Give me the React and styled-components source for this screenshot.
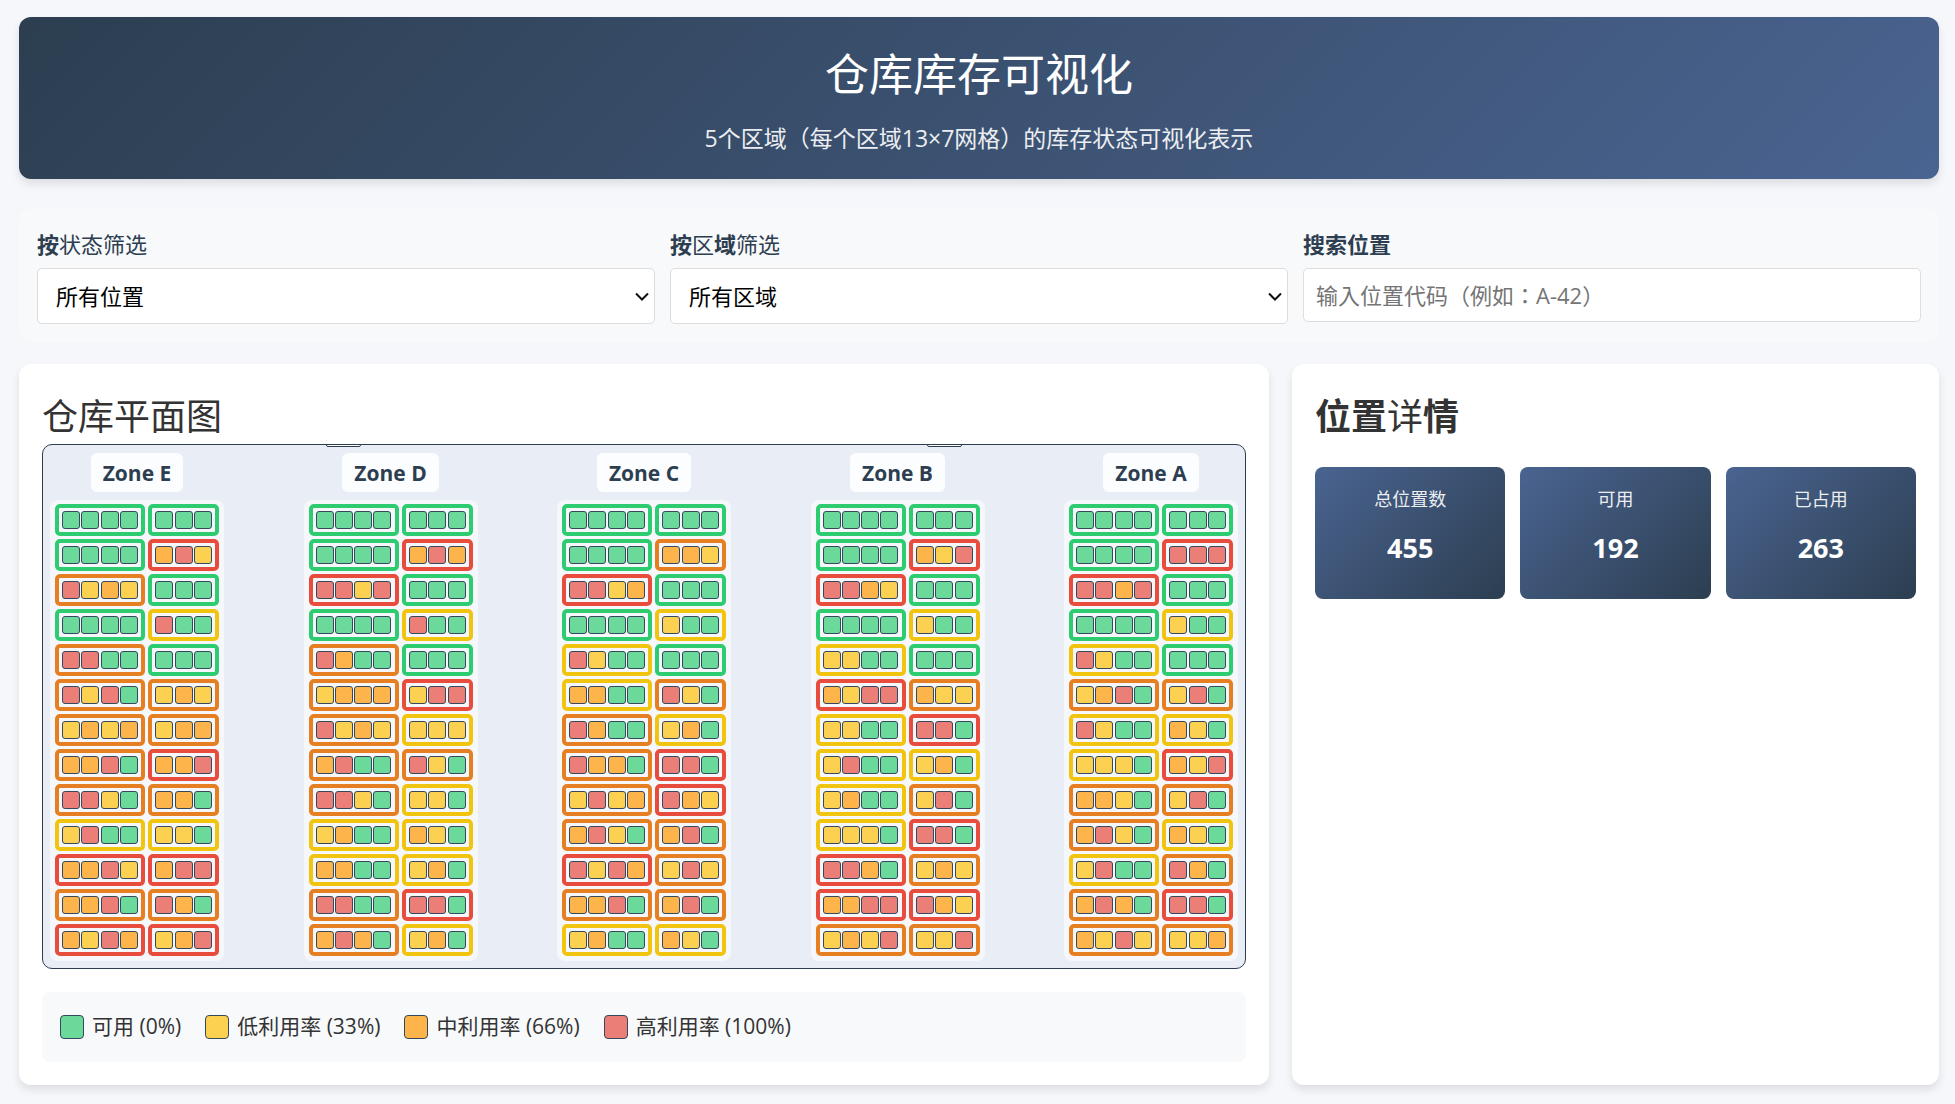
import React from "react";
import styled, { createGlobalStyle } from "styled-components";

const sans = '"Open Sans", "Noto Sans CJK SC", sans-serif';

const status = {
  g: { fill: "#6ad99a", line: "#2ecc71" },
  y: { fill: "#fcd050", line: "#f1c40f" },
  o: { fill: "#fcb44b", line: "#e67e22" },
  r: { fill: "#eb7e76", line: "#e74c3c" },
};

/* Each shelf is "outline:cells"; a row holds a four-cell and a three-cell shelf. */
const zones = [
  {
    name: "Zone E",
    rows: [
      "g:gggg g:ggg", "g:gggg r:ory", "o:ryoy g:ggg", "g:gggg y:rgg", "o:rrgg g:ggg",
      "o:ryrg o:yoy", "o:yoyo o:yoo", "o:oorg r:oor", "o:rryg o:oog", "y:yrgg y:yyg",
      "r:oory r:orr", "o:oorg o:rog", "r:oyro r:yor",
    ],
  },
  {
    name: "Zone D",
    rows: [
      "g:gggg g:ggg", "g:gggg r:oro", "r:rryr g:ggg", "g:gggg y:rgg", "o:rogg g:ggg",
      "o:yooo r:yrr", "o:ryoy y:yyy", "o:orgg o:ryg", "o:rryg y:yyg", "y:yogg y:oyg",
      "y:oogg y:yog", "o:rrgg r:rrg", "o:orog y:yog",
    ],
  },
  {
    name: "Zone C",
    rows: [
      "g:gggg g:ggg", "g:gggg o:ooy", "r:rryo g:ggg", "g:gggg y:ygg", "y:rygg g:ggg",
      "y:oogg o:ryg", "o:rogg y:yog", "o:roog r:rrg", "o:yryo r:roy", "o:oryg o:org",
      "r:ryro o:yry", "o:oorg o:org", "y:yogg y:oyg",
    ],
  },
  {
    name: "Zone B",
    rows: [
      "g:gggg g:ggg", "g:gggg r:oyr", "r:rroy g:ggg", "g:gggg y:ygg", "y:yygg g:ggg",
      "r:oyrr o:oyy", "y:yygg r:rrg", "y:yrgg y:yog", "y:yogg o:yrg", "y:yyyg r:rrg",
      "r:rrog o:yoy", "r:oorr r:roy", "o:yoyr o:yyr",
    ],
  },
  {
    name: "Zone A",
    rows: [
      "g:gggg g:ggg", "g:gggg r:rrr", "r:rror g:ggg", "g:gggg y:ygg", "y:rygg g:ggg",
      "o:yorg o:yrg", "y:rygg y:oyg", "y:yyyg r:oyr", "o:ooyg o:yrg", "o:oryg y:oyg",
      "y:yrgg o:rog", "o:orog r:rrg", "o:oyry o:yyo",
    ],
  },
];

const legend = [
  ["g", "可用 (0%)"],
  ["y", "低利用率 (33%)"],
  ["o", "中利用率 (66%)"],
  ["r", "高利用率 (100%)"],
];

const GlobalStyle = createGlobalStyle`
  *, *::before, *::after { box-sizing: border-box; }
  body {
    margin: 0;
    background: #f5f7fa;
    color: #333;
    font-family: ${sans};
  }
`;

const Page = styled.div`
  min-height: 100vh;
  display: flex;
  flex-direction: column;
  padding: 17px 16px 19px 19px;
`;

const Banner = styled.header`
  display: flex;
  flex-direction: column;
  align-items: center;
  gap: 13px;
  padding: 24px 24px 22px;
  border-radius: 12px;
  background: linear-gradient(135deg, #2c3e50, #4a6491);
  box-shadow: 0 5px 8px rgba(0, 0, 0, 0.1);
  color: #fff;
  text-align: center;
`;

const Title = styled.h1`
  margin: 0;
  font-size: 44px;
  line-height: 66px;
  font-weight: 400;
`;

const Subtitle = styled.p`
  margin: 0;
  font-size: 23px;
  line-height: 37px;
  opacity: 0.9;
`;

const Filters = styled.form`
  display: grid;
  grid-template-columns: repeat(3, 1fr);
  align-items: start;
  gap: 15px;
  margin: 30px 0 22px;
  padding: 18px;
  border-radius: 10px;
  background: #f8f9fb;
`;

const Field = styled.div`
  display: flex;
  flex-direction: column;
  gap: 6px;
`;

const Label = styled.label`
  font-size: 22px;
  line-height: 35px;
  font-weight: 700;
  color: #2c3e50;
`;

const Thin = styled.span`
  font-weight: 400;
`;

const SelectBox = styled.div`
  position: relative;
`;

const Select = styled.select`
  display: block;
  width: 100%;
  height: 56px;
  padding: 0 30px 0 18px;
  border: 1px solid #ddd;
  border-radius: 5px;
  background: #fff;
  color: #000;
  font-family: inherit;
  font-size: 22px;
  appearance: none;
`;

const Chevron = styled.svg`
  position: absolute;
  top: 24px;
  right: 6px;
  width: 14px;
  height: 9px;
  pointer-events: none;
`;

const Input = styled.input`
  width: 100%;
  height: 54px;
  padding: 0 12px;
  border: 1px solid #ddd;
  border-radius: 5px;
  background: #fff;
  font-family: "Open Sans", "Noto Sans CJK TC", sans-serif;
  font-size: 22px;

  &::placeholder {
    color: #757575;
  }
`;

const Main = styled.main`
  flex: 1;
  display: grid;
  grid-template-columns: minmax(0, 1.932fr) minmax(0, 1fr);
  gap: 23px;
`;

const Card = styled.section`
  padding: 23px;
  border-radius: 12px;
  background: #fff;
  box-shadow: 0 5px 8px rgba(0, 0, 0, 0.1);
`;

const Heading = styled.h2`
  margin: 0;
  padding-top: 2px;
  font-size: 36px;
  line-height: 55px;
  font-weight: ${(p) => (p.$bold ? 700 : 400)};
`;

const Plan = styled.div`
  position: relative;
  display: flex;
  justify-content: space-between;
  padding: 8px 7px 7px;
  overflow: hidden;
  border: 1px solid #2c3e50;
  border-radius: 10px;
  background: #e9eef6;
`;

const Door = styled.span`
  position: absolute;
  top: -10px;
  left: ${(p) => p.$at};
  width: 35px;
  height: 12px;
  margin-left: -18px;
  border: 1px solid #2c3e50;
  border-radius: 2px;
  background: #fff;
`;

const Zone = styled.div`
  display: flex;
  flex-direction: column;
  align-items: center;
  gap: 8px;
`;

const ZoneName = styled.h3`
  margin: 0;
  padding: 2px 12px 0;
  border-radius: 6px;
  background: rgba(255, 255, 255, 0.85);
  color: #2c3e50;
  font-size: 21px;
  line-height: 37px;
  font-weight: 700;
`;

const Racks = styled.div`
  display: grid;
  grid-template-columns: 90px 71px;
  gap: 3px;
  padding: 4px 5px 5px;
  border-radius: 8px;
  background: #f5f7fb;
`;

const Shelf = styled.div`
  display: flex;
  justify-content: space-between;
  padding: 3px;
  border: 4px solid ${(p) => status[p.$status].line};
  border-radius: 5px;
`;

const Cell = styled.span`
  width: 18px;
  height: 18px;
  border: 1px solid #34495e;
  border-radius: 3px;
  background: ${(p) => status[p.$status].fill};
`;

const Legend = styled.ul`
  display: flex;
  flex-wrap: wrap;
  gap: 24px;
  margin: 23px 0 0;
  padding: 17px 18px 18px;
  border-radius: 8px;
  background: #f8f9fb;
  list-style: none;
`;

const LegendItem = styled.li`
  display: flex;
  align-items: center;
  gap: 8px;
  font-size: 21px;
  line-height: 35px;
`;

const Swatch = styled.span`
  width: 24px;
  height: 24px;
  border: 1px solid #34495e;
  border-radius: 4px;
  background: ${(p) => status[p.$status].fill};
`;

const Stats = styled.div`
  display: grid;
  grid-template-columns: repeat(3, 1fr);
  gap: 15px;
  margin-top: 23px;
`;

const Stat = styled.div`
  display: flex;
  flex-direction: column;
  align-items: center;
  gap: 13px;
  padding: 18px 18px 29px;
  border-radius: 8px;
  background: linear-gradient(135deg, #4a6491, #2c3e50);
  color: #fff;
`;

const StatLabel = styled.span`
  font-size: 18px;
  line-height: 28px;
  opacity: 0.9;
`;

const StatValue = styled.strong`
  font-size: 27px;
  line-height: 44px;
  font-weight: 700;
`;

function Dropdown({ id, children }) {
  return (
    <SelectBox>
      <Select id={id}>{children}</Select>
      <Chevron viewBox="0 0 14 9" fill="none" stroke="#111" strokeWidth="2" aria-hidden="true">
        <path d="M1 1.5 7 7.5 13 1.5" />
      </Chevron>
    </SelectBox>
  );
}

function ZoneBlock({ zone }) {
  return (
    <Zone>
      <ZoneName>{zone.name}</ZoneName>
      <Racks>
        {zone.rows.flatMap((row, r) =>
          row.split(" ").map((shelf, s) => {
            const [outline, cells] = shelf.split(":");
            return (
              <Shelf key={`${r}-${s}`} $status={outline}>
                {cells.split("").map((c, i) => (
                  <Cell key={i} $status={c} />
                ))}
              </Shelf>
            );
          })
        )}
      </Racks>
    </Zone>
  );
}

export default function App() {
  return (
    <>
      <GlobalStyle />
      <Page lang="zh-CN">
        <Banner>
          <Title>仓库库存可视化</Title>
          <Subtitle>5个区域（每个区域13×7网格）的库存状态可视化表示</Subtitle>
        </Banner>

        <Filters>
          <Field>
            <Label htmlFor="status">按<Thin>状态筛选</Thin></Label>
            <Dropdown id="status">
              <option>所有位置</option>
            </Dropdown>
          </Field>
          <Field>
            <Label htmlFor="zone">按<Thin>区</Thin>域<Thin>筛选</Thin></Label>
            <Dropdown id="zone">
              <option>所有区域</option>
            </Dropdown>
          </Field>
          <Field>
            <Label htmlFor="search">搜索位置</Label>
            <Input id="search" type="text" lang="zh-TW" placeholder="输入位置代码（例如：A-42）" />
          </Field>
        </Filters>

        <Main>
          <Card>
            <Heading>仓库平面图</Heading>
            <Plan>
              <Door $at="25%" />
              <Door $at="75%" />
              {zones.map((zone) => (
                <ZoneBlock key={zone.name} zone={zone} />
              ))}
            </Plan>
            <Legend>
              {legend.map(([key, text]) => (
                <LegendItem key={key}>
                  <Swatch $status={key} />
                  {text}
                </LegendItem>
              ))}
            </Legend>
          </Card>

          <Card>
            <Heading $bold>位置<Thin>详</Thin>情</Heading>
            <Stats>
              <Stat>
                <StatLabel>总位置数</StatLabel>
                <StatValue>455</StatValue>
              </Stat>
              <Stat>
                <StatLabel>可用</StatLabel>
                <StatValue>192</StatValue>
              </Stat>
              <Stat>
                <StatLabel>已占用</StatLabel>
                <StatValue>263</StatValue>
              </Stat>
            </Stats>
          </Card>
        </Main>
      </Page>
    </>
  );
}
